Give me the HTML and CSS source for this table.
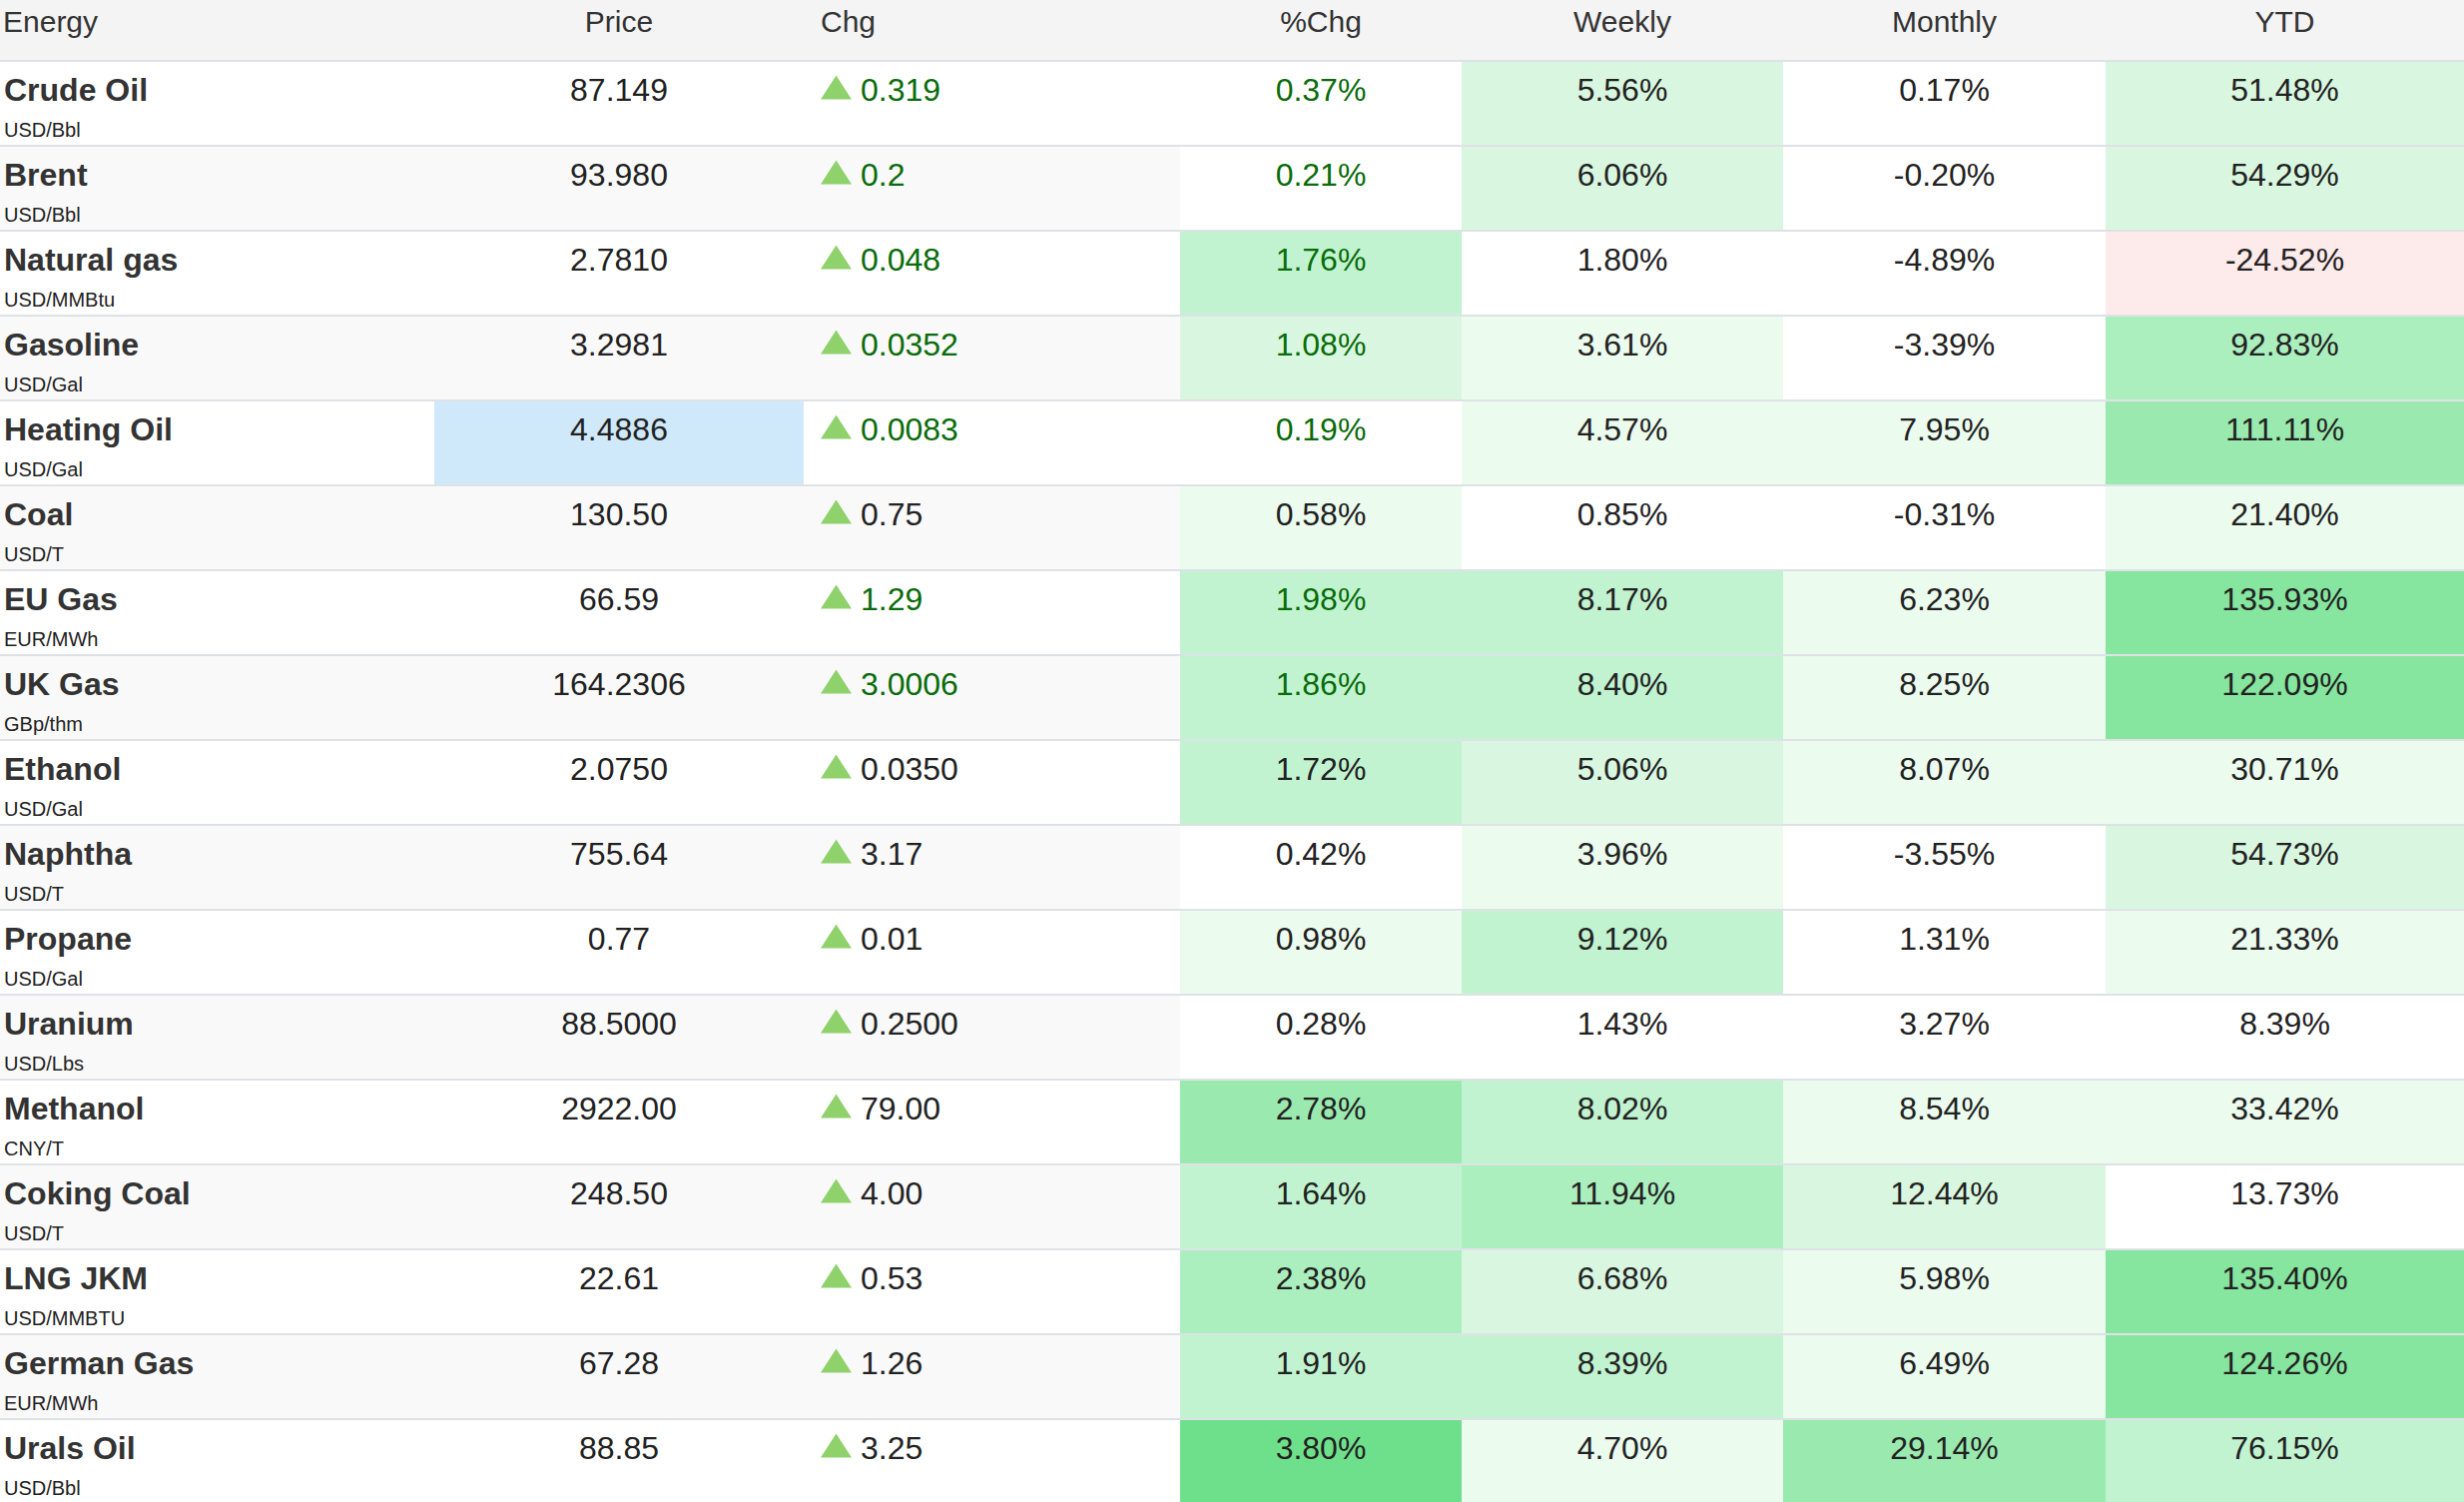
FILE: index.html
```html
<!DOCTYPE html>
<html lang="en">
<head>
<meta charset="utf-8">
<title>Energy</title>
<link rel="stylesheet" href="styles.css">
</head>
<body>
<div class="table">
  <div class="row head">
    <div class="cell name">Energy</div>
    <div class="cell center">Price</div>
    <div class="cell chg">Chg</div>
    <div class="cell center">%Chg</div>
    <div class="cell center">Weekly</div>
    <div class="cell center">Monthly</div>
    <div class="cell center">YTD</div>
  </div>

  <div class="row">
    <div class="cell name"><div class="title">Crude Oil</div><div class="unit">USD/Bbl</div></div>
    <div class="cell center">87.149</div>
    <div class="cell chg up"><svg class="tri" viewBox="0 0 31 24"><polygon points="15.5,0 31,24 0,24"/></svg>0.319</div>
    <div class="cell pct up">0.37%</div>
    <div class="cell pct l2">5.56%</div>
    <div class="cell pct">0.17%</div>
    <div class="cell pct l2">51.48%</div>
  </div>

  <div class="row">
    <div class="cell name"><div class="title">Brent</div><div class="unit">USD/Bbl</div></div>
    <div class="cell center">93.980</div>
    <div class="cell chg up"><svg class="tri" viewBox="0 0 31 24"><polygon points="15.5,0 31,24 0,24"/></svg>0.2</div>
    <div class="cell pct up">0.21%</div>
    <div class="cell pct l2">6.06%</div>
    <div class="cell pct">-0.20%</div>
    <div class="cell pct l2">54.29%</div>
  </div>

  <div class="row">
    <div class="cell name"><div class="title">Natural gas</div><div class="unit">USD/MMBtu</div></div>
    <div class="cell center">2.7810</div>
    <div class="cell chg up"><svg class="tri" viewBox="0 0 31 24"><polygon points="15.5,0 31,24 0,24"/></svg>0.048</div>
    <div class="cell pct up l3">1.76%</div>
    <div class="cell pct">1.80%</div>
    <div class="cell pct">-4.89%</div>
    <div class="cell pct neg">-24.52%</div>
  </div>

  <div class="row">
    <div class="cell name"><div class="title">Gasoline</div><div class="unit">USD/Gal</div></div>
    <div class="cell center">3.2981</div>
    <div class="cell chg up"><svg class="tri" viewBox="0 0 31 24"><polygon points="15.5,0 31,24 0,24"/></svg>0.0352</div>
    <div class="cell pct up l2">1.08%</div>
    <div class="cell pct l1">3.61%</div>
    <div class="cell pct">-3.39%</div>
    <div class="cell pct l4">92.83%</div>
  </div>

  <div class="row">
    <div class="cell name"><div class="title">Heating Oil</div><div class="unit">USD/Gal</div></div>
    <div class="cell center hl">4.4886</div>
    <div class="cell chg up"><svg class="tri" viewBox="0 0 31 24"><polygon points="15.5,0 31,24 0,24"/></svg>0.0083</div>
    <div class="cell pct up">0.19%</div>
    <div class="cell pct l1">4.57%</div>
    <div class="cell pct l1">7.95%</div>
    <div class="cell pct l5">111.11%</div>
  </div>

  <div class="row">
    <div class="cell name"><div class="title">Coal</div><div class="unit">USD/T</div></div>
    <div class="cell center">130.50</div>
    <div class="cell chg"><svg class="tri" viewBox="0 0 31 24"><polygon points="15.5,0 31,24 0,24"/></svg>0.75</div>
    <div class="cell pct l1">0.58%</div>
    <div class="cell pct">0.85%</div>
    <div class="cell pct">-0.31%</div>
    <div class="cell pct l1">21.40%</div>
  </div>

  <div class="row">
    <div class="cell name"><div class="title">EU Gas</div><div class="unit">EUR/MWh</div></div>
    <div class="cell center">66.59</div>
    <div class="cell chg up"><svg class="tri" viewBox="0 0 31 24"><polygon points="15.5,0 31,24 0,24"/></svg>1.29</div>
    <div class="cell pct up l3">1.98%</div>
    <div class="cell pct l3">8.17%</div>
    <div class="cell pct l1">6.23%</div>
    <div class="cell pct l6">135.93%</div>
  </div>

  <div class="row">
    <div class="cell name"><div class="title">UK Gas</div><div class="unit">GBp/thm</div></div>
    <div class="cell center">164.2306</div>
    <div class="cell chg up"><svg class="tri" viewBox="0 0 31 24"><polygon points="15.5,0 31,24 0,24"/></svg>3.0006</div>
    <div class="cell pct up l3">1.86%</div>
    <div class="cell pct l3">8.40%</div>
    <div class="cell pct l1">8.25%</div>
    <div class="cell pct l6">122.09%</div>
  </div>

  <div class="row">
    <div class="cell name"><div class="title">Ethanol</div><div class="unit">USD/Gal</div></div>
    <div class="cell center">2.0750</div>
    <div class="cell chg"><svg class="tri" viewBox="0 0 31 24"><polygon points="15.5,0 31,24 0,24"/></svg>0.0350</div>
    <div class="cell pct l3">1.72%</div>
    <div class="cell pct l2">5.06%</div>
    <div class="cell pct l1">8.07%</div>
    <div class="cell pct l1">30.71%</div>
  </div>

  <div class="row">
    <div class="cell name"><div class="title">Naphtha</div><div class="unit">USD/T</div></div>
    <div class="cell center">755.64</div>
    <div class="cell chg"><svg class="tri" viewBox="0 0 31 24"><polygon points="15.5,0 31,24 0,24"/></svg>3.17</div>
    <div class="cell pct">0.42%</div>
    <div class="cell pct l1">3.96%</div>
    <div class="cell pct">-3.55%</div>
    <div class="cell pct l2">54.73%</div>
  </div>

  <div class="row">
    <div class="cell name"><div class="title">Propane</div><div class="unit">USD/Gal</div></div>
    <div class="cell center">0.77</div>
    <div class="cell chg"><svg class="tri" viewBox="0 0 31 24"><polygon points="15.5,0 31,24 0,24"/></svg>0.01</div>
    <div class="cell pct l1">0.98%</div>
    <div class="cell pct l3">9.12%</div>
    <div class="cell pct">1.31%</div>
    <div class="cell pct l1">21.33%</div>
  </div>

  <div class="row">
    <div class="cell name"><div class="title">Uranium</div><div class="unit">USD/Lbs</div></div>
    <div class="cell center">88.5000</div>
    <div class="cell chg"><svg class="tri" viewBox="0 0 31 24"><polygon points="15.5,0 31,24 0,24"/></svg>0.2500</div>
    <div class="cell pct">0.28%</div>
    <div class="cell pct">1.43%</div>
    <div class="cell pct">3.27%</div>
    <div class="cell pct">8.39%</div>
  </div>

  <div class="row">
    <div class="cell name"><div class="title">Methanol</div><div class="unit">CNY/T</div></div>
    <div class="cell center">2922.00</div>
    <div class="cell chg"><svg class="tri" viewBox="0 0 31 24"><polygon points="15.5,0 31,24 0,24"/></svg>79.00</div>
    <div class="cell pct l5">2.78%</div>
    <div class="cell pct l3">8.02%</div>
    <div class="cell pct l1">8.54%</div>
    <div class="cell pct l1">33.42%</div>
  </div>

  <div class="row">
    <div class="cell name"><div class="title">Coking Coal</div><div class="unit">USD/T</div></div>
    <div class="cell center">248.50</div>
    <div class="cell chg"><svg class="tri" viewBox="0 0 31 24"><polygon points="15.5,0 31,24 0,24"/></svg>4.00</div>
    <div class="cell pct l3">1.64%</div>
    <div class="cell pct l4">11.94%</div>
    <div class="cell pct l2">12.44%</div>
    <div class="cell pct">13.73%</div>
  </div>

  <div class="row">
    <div class="cell name"><div class="title">LNG JKM</div><div class="unit">USD/MMBTU</div></div>
    <div class="cell center">22.61</div>
    <div class="cell chg"><svg class="tri" viewBox="0 0 31 24"><polygon points="15.5,0 31,24 0,24"/></svg>0.53</div>
    <div class="cell pct l4">2.38%</div>
    <div class="cell pct l2">6.68%</div>
    <div class="cell pct l1">5.98%</div>
    <div class="cell pct l6">135.40%</div>
  </div>

  <div class="row">
    <div class="cell name"><div class="title">German Gas</div><div class="unit">EUR/MWh</div></div>
    <div class="cell center">67.28</div>
    <div class="cell chg"><svg class="tri" viewBox="0 0 31 24"><polygon points="15.5,0 31,24 0,24"/></svg>1.26</div>
    <div class="cell pct l3">1.91%</div>
    <div class="cell pct l3">8.39%</div>
    <div class="cell pct l1">6.49%</div>
    <div class="cell pct l6">124.26%</div>
  </div>

  <div class="row">
    <div class="cell name"><div class="title">Urals Oil</div><div class="unit">USD/Bbl</div></div>
    <div class="cell center">88.85</div>
    <div class="cell chg"><svg class="tri" viewBox="0 0 31 24"><polygon points="15.5,0 31,24 0,24"/></svg>3.25</div>
    <div class="cell pct l7">3.80%</div>
    <div class="cell pct l1">4.70%</div>
    <div class="cell pct l5">29.14%</div>
    <div class="cell pct l3">76.15%</div>
  </div>
</div>
</body>
</html>
```
FILE: styles.css
```css
html, body {
  margin: 0;
  padding: 0;
  background: #ffffff;
  overflow: hidden;
}

body {
  font-family: "Liberation Sans", Arial, Helvetica, sans-serif;
  color: #222222;
  width: 2468px;
}

.table {
  display: flex;
  flex-direction: column;
  width: 2468px;
}

.row {
  display: grid;
  grid-template-columns: 435px 370px 377px 282px 322px 323px 359px;
  height: 85px;
  box-sizing: border-box;
  border-bottom: 2px solid #dee2e6;
  background: #ffffff;
}

.row:nth-child(odd) {
  background: #f9f9f9;
}

.row.head {
  height: 62px;
  background: #f4f4f4;
  font-size: 30px;
  color: #333333;
}

.cell {
  box-sizing: border-box;
  padding-top: 8px;
  font-size: 32px;
  line-height: 40px;
  white-space: nowrap;
}

.head .cell {
  font-size: 30px;
  line-height: 36px;
  padding-top: 4px;
}

.name {
  padding-left: 4px;
  color: #333333;
}

.head .name {
  padding-left: 3px;
}

.title {
  font-weight: bold;
  font-size: 32px;
  line-height: 40px;
}

.unit {
  font-size: 20px;
  line-height: 24px;
  margin-top: 8px;
  color: #222222;
}

.center {
  text-align: center;
}

.chg {
  padding-left: 17px;
  display: flex;
  align-items: flex-start;
}

.tri {
  width: 31px;
  height: 25px;
  margin-top: 5px;
  margin-right: 9px;
  flex: none;
  fill: #8fd16a;
}

.pct {
  text-align: center;
  background: #ffffff;
}

.up {
  color: #0a6c0a;
}

.hl { background: #cfe9fa; }
.l1 { background: #ebfbee; }
.l2 { background: #d9f7e0; }
.l3 { background: #c1f3d0; }
.l4 { background: #acefbf; }
.l5 { background: #9aeab0; }
.l6 { background: #86e59e; }
.l7 { background: #6ee08b; }
.neg { background: #fdeaea; }
```
